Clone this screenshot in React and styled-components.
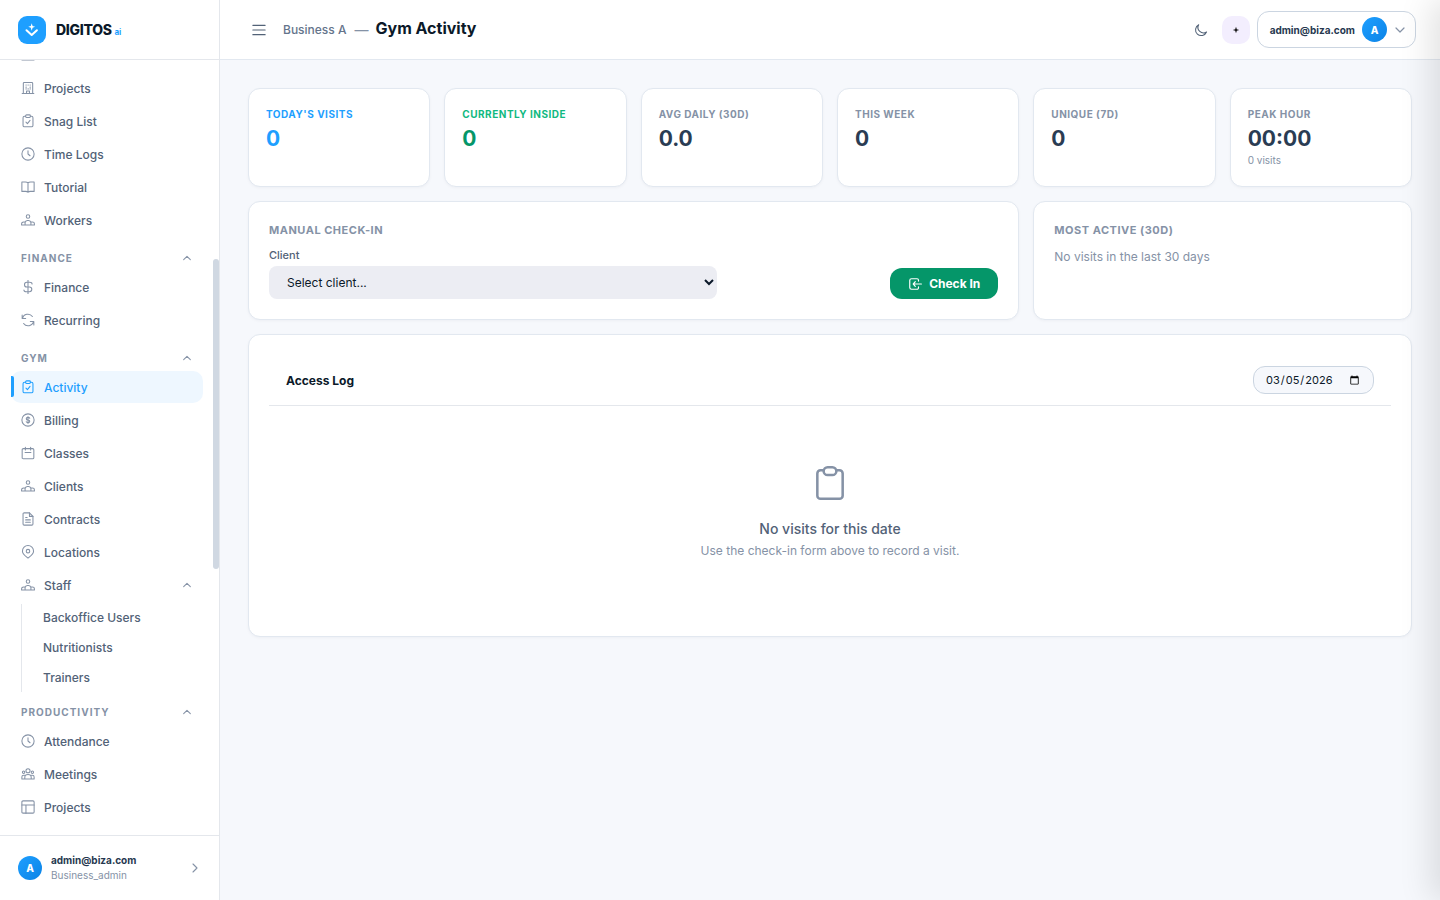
import React, { useState } from "react";
import styled, { createGlobalStyle, css } from "styled-components";

const paths = {
  building: (
    <>
      <path d="M2 21.5h20M4 21.5V4a1.5 1.5 0 0 1 1.5-1.5h13A1.5 1.5 0 0 1 20 4v17.500M9.500 21.500V17h5v4.500" />
      <path d="M8.500 7h.5M12 7h.5M15.500 7h.5M8.500 10.500h.5M15.500 10.500h.5M8.500 13.500h.5M12 13.500h.5M15.500 13.500h.5" />
    </>
  ),
  laptop: <path d="M5 15V5h14v10M1.500 19.500h21M1.500 20.500h21" />,
  clipboardCheck: (
    <>
      <path d="M8 4H6a2.500 2.500 0 0 0-2.500 2.500v13A2.500 2.500 0 0 0 6 22h12a2.500 2.500 0 0 0 2.500-2.500v-13A2.500 2.500 0 0 0 18 4h-2" />
      <rect x="8" y="1.500" width="8" height="4.500" rx="1.500" />
      <path d="m8.500 14 2.500 2.500 4.500-5.500" />
    </>
  ),
  clipboard: (
    <>
      <path d="M8 4H6a2 2 0 0 0-2 2v14a2 2 0 0 0 2 2h12a2 2 0 0 0 2-2V6a2 2 0 0 0-2-2h-2" />
      <rect x="8" y="2" width="8" height="5" rx="2.500" />
    </>
  ),
  clock: (
    <>
      <circle cx="12" cy="12" r="10.500" />
      <path d="M12 6.500V12l3.500 3" />
    </>
  ),
  book: (
    <path d="M12 5c-1-1-2.500-1.500-4.500-1.500H1.500v16h6.500c2 0 3 .5 4 1.500 1-1 2-1.500 4-1.500h6.500v-16h-6C14.500 3.500 13 4 12 5Zm0 0v16" />
  ),
  people: (
    <>
      <circle cx="12" cy="6" r="3" />
      <path d="M7 20.500v-4a4 4 0 0 1 4-3.500h2a4 4 0 0 1 4 3.500v4M7 15.500H4.500A3.500 3 0 0 0 1 18.500v2h22v-2a3.500 3 0 0 0-3.500-3H17" />
    </>
  ),
  meeting: (
    <>
      <circle cx="12" cy="6.500" r="3.500" />
      <circle cx="4.500" cy="9" r="2" />
      <circle cx="19.500" cy="9" r="2" />
      <path d="M6.500 20.500v-2.500a5.500 5 0 0 1 11 0v2.500M6 14H4.500a3 3 0 0 0-3 3v3.500h21V17a3 3 0 0 0-3-3H18" />
    </>
  ),
  dollar: <path d="M12 0v24M19 7c0-2-2-3-4.500-3H10a4 4 0 0 0 0 8h4.500a4 4 0 0 1 0 8H9.500C7 20 5 19 5 17" />,
  refresh: (
    <path d="M21.500 14.500A9.500 9.500 0 0 1 4.500 18M2.500 9.500A9.500 9.500 0 0 1 19.500 6M2 3.500v6h6M22 20.500v-6h-6" />
  ),
  coin: (
    <>
      <circle cx="12" cy="12" r="10.500" />
      <path d="M12 6v12M15 9c-.5-1-1.500-1.500-3-1.500-4 0-4 4.500 0 4.500s4 4.500 0 4.500c-1.500 0-2.500-.5-3-1.500" />
    </>
  ),
  calendar: (
    <>
      <rect x="2" y="4.500" width="20" height="17.500" rx="2" />
      <path d="M7.500 2v5M16.500 2v5M7 11h10" />
    </>
  ),
  file: (
    <>
      <path d="M14.500 1.500H5.500a2 2 0 0 0-2 2v17a2 2 0 0 0 2 2h13a2 2 0 0 0 2-2V7.500l-6-6Z" />
      <path d="M14.500 1.500v6h6M8 9.500h2.500M8 13.500h8M8 17.500h8" />
    </>
  ),
  pin: (
    <>
      <path d="M12 22.500c4-3.500 9.500-7 9.500-12a9.500 9.500 0 0 0-19 0c0 5 5.500 8.500 9.500 12Z" />
      <circle cx="12" cy="10.500" r="3" />
    </>
  ),
  layout: (
    <>
      <rect x="1.500" y="1.500" width="21" height="21" rx="2" />
      <path d="M1.500 8.500h21M8.500 8.500v14" />
    </>
  ),
  menu: <path d="M1.500 4h21M1.500 12h21M1.500 20h21" />,
  moon: <path d="M8 3a9.800 9.800 0 1 0 13.500 12.500A9.500 9.500 0 0 1 8 3Z" />,
  up: <path d="m4 16 8-8 8 8" />,
  down: <path d="m4 8 8 8 8-8" />,
  right: <path d="m8 4 8 8-8 8" />,
  login: (
    <path d="M18 7V5.500A2.500 2.500 0 0 0 15.500 3H6a3 3 0 0 0-3 3v12a3 3 0 0 0 3 3h9.500a2.500 2.500 0 0 0 2.500-2.500V17M23 12H9M12.500 8 9 12l3.500 4" />
  ),
};

const Icon = ({ name, size = 14, stroke = 1.8 }) => (
  <svg
    width={size}
    height={size}
    viewBox="0 0 24 24"
    fill="none"
    stroke="currentColor"
    strokeWidth={stroke}
    strokeLinecap="round"
    strokeLinejoin="round"
    aria-hidden="true"
  >
    {paths[name]}
  </svg>
);

const sections = [
  {
    items: [
      { name: "Projects", icon: "building" },
      { name: "Snag List", icon: "clipboardCheck" },
      { name: "Time Logs", icon: "clock" },
      { name: "Tutorial", icon: "book" },
      { name: "Workers", icon: "people" },
    ],
  },
  {
    title: "Finance",
    items: [
      { name: "Finance", icon: "dollar" },
      { name: "Recurring", icon: "refresh" },
    ],
  },
  {
    title: "Gym",
    items: [
      { name: "Activity", icon: "clipboardCheck", active: true },
      { name: "Billing", icon: "coin" },
      { name: "Classes", icon: "calendar" },
      { name: "Clients", icon: "people" },
      { name: "Contracts", icon: "file" },
      { name: "Locations", icon: "pin" },
      {
        name: "Staff",
        icon: "people",
        children: ["Backoffice Users", "Nutritionists", "Trainers"],
      },
    ],
  },
  {
    title: "Productivity",
    items: [
      { name: "Attendance", icon: "clock" },
      { name: "Meetings", icon: "meeting" },
      { name: "Projects", icon: "layout" },
    ],
  },
];

const stats = [
  { label: "Today's visits", value: "0", labelColor: "#1e9fff", color: "#1e9fff" },
  { label: "Currently inside", value: "0", labelColor: "#10b981", color: "#059669" },
  { label: "Avg daily (30d)", value: "0.0" },
  { label: "This week", value: "0" },
  { label: "Unique (7d)", value: "0" },
  { label: "Peak hour", value: "00:00", note: "0 visits" },
];

const NavItem = ({ item }) => (
  <>
    <NavLink href="#" $active={item.active}>
      <Icon name={item.icon} />
      <NavName>{item.name}</NavName>
      {item.children && <Icon name="up" size={10} stroke={2.5} />}
    </NavLink>
    {item.children && (
      <SubNav>
        {item.children.map((child) => (
          <SubLink href="#" key={child}>
            {child}
          </SubLink>
        ))}
      </SubNav>
    )}
  </>
);

const App = () => {
  const [date, setDate] = useState("2026-03-05");

  return (
    <>
      <GlobalStyle />
      <Layout>
        <Sidebar>
          <Brand>
            <Logo>
              <svg width="28" height="28" viewBox="0 0 28 28" fill="none" aria-hidden="true">
                <path d="m8.500 14.200 5.200 4.800 5.200-4.800" stroke="#fff" strokeWidth="2" strokeLinecap="round" strokeLinejoin="round" />
                <path d="m13.700 7.200.9 2.700 2.500.9-2.500.9-.9 3-.9-3-2.500-.9 2.500-.9Z" fill="#fff" />
              </svg>
            </Logo>
            <BrandName>
              DIGITOS <small>ai</small>
            </BrandName>
          </Brand>
          <Nav>
            <ScrolledItem aria-hidden="true">
              <Icon name="laptop" />
            </ScrolledItem>
            {sections.map((section, i) => (
              <React.Fragment key={i}>
                {section.title && (
                  <SectionTitle>
                    {section.title}
                    <Icon name="up" size={10} stroke={2.5} />
                  </SectionTitle>
                )}
                {section.items.map((item) => (
                  <NavItem item={item} key={item.name} />
                ))}
              </React.Fragment>
            ))}
            <ScrollThumb />
          </Nav>
          <Profile>
            <Avatar $size={24}>A</Avatar>
            <ProfileText>
              <strong>admin@biza.com</strong>
              <span>Business_admin</span>
            </ProfileText>
            <Icon name="right" size={12} stroke={2.2} />
          </Profile>
        </Sidebar>

        <Main>
          <Header>
            <MenuButton aria-label="Toggle menu">
              <Icon name="menu" stroke={2} />
            </MenuButton>
            <Crumb>Business A</Crumb>
            <Dash>—</Dash>
            <Title>Gym Activity</Title>
            <ThemeButton aria-label="Dark mode">
              <Icon name="moon" stroke={1.8} />
            </ThemeButton>
            <AssistantButton aria-label="Assistant">
              <svg width="8" height="8" viewBox="0 0 8 8" aria-hidden="true">
                <path d="M4 .8 4.800 3.200 7.200 4 4.800 4.800 4 7.200 3.200 4.800.8 4l2.400-.8Z" fill="#111" />
              </svg>
            </AssistantButton>
            <AccountButton>
              admin@biza.com
              <Avatar $size={25}>A</Avatar>
              <Icon name="down" size={12} stroke={2.4} />
            </AccountButton>
          </Header>

          <Content>
            {stats.map((stat) => (
              <StatCard key={stat.label}>
                <StatLabel $color={stat.labelColor}>{stat.label}</StatLabel>
                <StatValue $color={stat.color}>{stat.value}</StatValue>
                {stat.note && <StatNote>{stat.note}</StatNote>}
              </StatCard>
            ))}

            <Panel $span={4}>
              <PanelTitle>Manual check-in</PanelTitle>
              <CheckInForm onSubmit={(e) => e.preventDefault()}>
                <Field>
                  <label htmlFor="client">Client</label>
                  <Select id="client">
                    <option>Select client...</option>
                  </Select>
                </Field>
                <CheckInButton type="submit">
                  <Icon name="login" stroke={2} />
                  Check In
                </CheckInButton>
              </CheckInForm>
            </Panel>

            <Panel $span={2}>
              <PanelTitle>Most active (30d)</PanelTitle>
              <Muted>No visits in the last 30 days</Muted>
            </Panel>

            <Panel $span={6}>
              <LogHeader>
                <h2>Access Log</h2>
                <DateInput
                  type="date"
                  aria-label="Log date"
                  value={date}
                  onChange={(e) => setDate(e.target.value)}
                />
              </LogHeader>
              <Empty>
                <Icon name="clipboard" size={38} stroke={1.6} />
                <h3>No visits for this date</h3>
                <Muted>Use the check-in form above to record a visit.</Muted>
              </Empty>
            </Panel>
          </Content>
        </Main>
      </Layout>
      <Drawer />
    </>
  );
};

const GlobalStyle = createGlobalStyle`
  * {
    box-sizing: border-box;
    margin: 0;
    padding: 0;
  }
  body {
    background: #f6f8fc;
    color: #0b1929;
    font-family: Inter, sans-serif;
    font-size: 12px;
  }
  button, select, input {
    font-family: inherit;
    color: inherit;
  }
  button {
    border: none;
    background: none;
    cursor: pointer;
  }
  a {
    color: inherit;
    text-decoration: none;
  }
  svg {
    display: block;
    flex-shrink: 0;
  }
`;

const Layout = styled.div`
  display: grid;
  grid-template-columns: 220px 1fr;
  height: 100vh;
`;

const Sidebar = styled.aside`
  display: flex;
  flex-direction: column;
  min-height: 0;
  background: #fff;
  border-right: 1px solid #e4e7ec;
`;

const Brand = styled.div`
  display: flex;
  align-items: center;
  gap: 10px;
  flex: 0 0 60px;
  padding: 0 18px;
  border-bottom: 1px solid #e4e7ec;
`;

const Logo = styled.div`
  width: 28px;
  height: 28px;
  border-radius: 9px;
  background: #1e9fff;
`;

const BrandName = styled.div`
  font-size: 14px;
  font-weight: 800;
  letter-spacing: -0.3px;
  small {
    font-size: 8px;
    font-weight: 700;
    letter-spacing: 0;
    color: #1e9fff;
  }
`;

const Nav = styled.nav`
  position: relative;
  display: flex;
  flex-direction: column;
  flex: 1;
  min-height: 0;
  gap: 1px;
  padding: 0 16px 0 11px;
  overflow: hidden;
`;

const NavLink = styled.a`
  display: flex;
  align-items: center;
  flex: 0 0 32px;
  gap: 9px;
  padding: 0 11px 0 10px;
  border-radius: 10px;
  color: #526277;
  font-weight: 500;
  svg {
    color: #8592a6;
  }
  ${({ $active }) =>
    $active &&
    css`
      position: relative;
      background: #eef7ff;
      color: #1e9fff;
      svg {
        color: #1e9fff;
      }
      &::before {
        content: "";
        position: absolute;
        left: 0;
        top: 5px;
        bottom: 6px;
        width: 3px;
        border-radius: 0 2px 2px 0;
        background: #1e9fff;
      }
    `}
`;

const NavName = styled.span`
  flex: 1;
`;

/* item already scrolled up under the brand bar */
const ScrolledItem = styled(NavLink).attrs({ as: "div" })`
  margin-top: -21px;
`;

const SectionTitle = styled.div`
  display: flex;
  align-items: center;
  justify-content: space-between;
  flex: 0 0 33px;
  padding: 8px 11px 0 10px;
  color: #8592a6;
  font-size: 10px;
  font-weight: 700;
  letter-spacing: 1px;
  text-transform: uppercase;
`;

const SubNav = styled.div`
  display: flex;
  flex-direction: column;
  flex-shrink: 0;
  gap: 2px;
  margin: 2px 0 -2px 10px;
  padding-left: 21px;
  border-left: 1px solid #e4e7ec;
`;

const SubLink = styled.a`
  color: #526277;
  font-weight: 500;
  line-height: 28px;
`;

const ScrollThumb = styled.div`
  position: absolute;
  top: 199px;
  right: 0;
  width: 6px;
  height: 40%;
  border-radius: 3px;
  background: #d0d8e2;
`;

const Profile = styled.div`
  display: flex;
  align-items: center;
  gap: 9px;
  flex: 0 0 65px;
  padding: 0 18px;
  border-top: 1px solid #e4e7ec;
  svg {
    color: #8592a6;
  }
`;

const Avatar = styled.span`
  display: flex;
  align-items: center;
  justify-content: center;
  width: ${({ $size }) => $size}px;
  height: ${({ $size }) => $size}px;
  border-radius: 50%;
  background: linear-gradient(135deg, #1e9fff, #0b83e6);
  color: #fff;
  font-size: 10px;
  font-weight: 800;
`;

const ProfileText = styled.div`
  display: flex;
  flex-direction: column;
  flex: 1;
  font-size: 10px;
  line-height: 15px;
  strong {
    color: #26384f;
    font-weight: 700;
  }
  span {
    color: #8592a6;
  }
`;

const Main = styled.main`
  min-width: 0;
`;

const Header = styled.header`
  display: flex;
  align-items: center;
  height: 60px;
  padding: 0 24px;
  background: #fff;
  border-bottom: 1px solid #e2e8f0;
`;

const MenuButton = styled.button`
  padding: 8px;
  color: #526277;
`;

const Crumb = styled.span`
  margin-left: 9px;
  color: #64748b;
  font-weight: 500;
`;

const Dash = styled.span`
  margin: 0 7px 0 8px;
  color: #8592a6;
  font-size: 14px;
`;

const Title = styled.h1`
  flex: 1;
  padding-bottom: 3px;
  font-size: 16px;
  font-weight: 700;
`;

const ThemeButton = styled.button`
  padding: 7px;
  color: #526277;
`;

const AssistantButton = styled.button`
  display: flex;
  align-items: center;
  justify-content: center;
  width: 28px;
  height: 28px;
  margin: 0 7px;
  border-radius: 10px;
  background: #f3eefe;
`;

const AccountButton = styled.button`
  display: flex;
  align-items: center;
  gap: 7px;
  height: 37px;
  padding: 0 9px 0 12px;
  border: 1px solid #cbd5e1;
  border-radius: 12px;
  color: #26384f;
  font-size: 10px;
  font-weight: 700;
  svg {
    color: #8592a6;
  }
`;

const Content = styled.div`
  display: grid;
  grid-template-columns: repeat(6, 1fr);
  gap: 14px;
  padding: 28px;
`;

const Card = styled.section`
  background: #fff;
  border: 1px solid #e2e8f0;
  border-radius: 12px;
  box-shadow: 0 1px 3px rgba(15, 23, 42, 0.04);
`;

const StatCard = styled(Card)`
  min-height: 99px;
  padding: 17px;
`;

const StatLabel = styled.div`
  color: ${({ $color }) => $color || "#8592a6"};
  font-size: 10px;
  font-weight: 700;
  letter-spacing: 0.5px;
  line-height: 16px;
  text-transform: uppercase;
`;

const StatValue = styled.div`
  color: ${({ $color }) => $color || "#2a3c53"};
  font-size: 21px;
  font-weight: 700;
  line-height: 34px;
`;

const StatNote = styled.div`
  color: #8592a6;
  font-size: 10px;
  line-height: 9px;
`;

const Panel = styled(Card)`
  grid-column: span ${({ $span }) => $span};
  padding: 20px;
`;

const PanelTitle = styled.h2`
  color: #8592a6;
  font-size: 11px;
  font-weight: 700;
  letter-spacing: 0.5px;
  line-height: 16px;
  margin-bottom: 9px;
  text-transform: uppercase;
`;

const CheckInForm = styled.form`
  display: flex;
  align-items: flex-end;
  justify-content: space-between;
`;

const Field = styled.div`
  display: flex;
  flex-direction: column;
  width: 448px;
  label {
    color: #526277;
    font-size: 11px;
    font-weight: 500;
    line-height: 16px;
    margin-bottom: 3px;
  }
`;

const Select = styled.select`
  height: 33px;
  padding: 0 0 0 14px;
  border: none;
  border-radius: 8px;
  background: #ecedf3;
  font-size: 12px;
`;

const CheckInButton = styled.button`
  display: flex;
  align-items: center;
  gap: 7px;
  height: 31px;
  padding: 0 18px;
  border-radius: 12px;
  background: #059669;
  color: #fff;
  font-size: 12px;
  font-weight: 700;
`;

const Muted = styled.p`
  color: #8592a6;
  line-height: 20px;
`;

const LogHeader = styled.div`
  display: flex;
  align-items: center;
  justify-content: space-between;
  padding: 11px 17px;
  border-bottom: 1px solid #e4e7ec;
  h2 {
    font-size: 12px;
    font-weight: 700;
  }
`;

const DateInput = styled.input`
  width: 121px;
  height: 28px;
  padding: 0 11px;
  border: 1px solid #cbd5e1;
  border-radius: 12px;
  background: #f6f8fc;
  font-size: 11px;
`;

const Empty = styled.div`
  display: flex;
  flex-direction: column;
  align-items: center;
  padding: 58px 0 55px;
  color: #8592a6;
  h3 {
    margin-top: 15px;
    color: #526277;
    font-size: 14px;
    font-weight: 500;
    line-height: 24px;
  }
`;

/* closed side drawer, only its shadow reaches the page */
const Drawer = styled.aside`
  position: fixed;
  top: 0;
  right: -400px;
  width: 400px;
  height: 100vh;
  box-shadow: -8px 0 32px rgba(0, 0, 0, 0.12);
`;

export default App;
